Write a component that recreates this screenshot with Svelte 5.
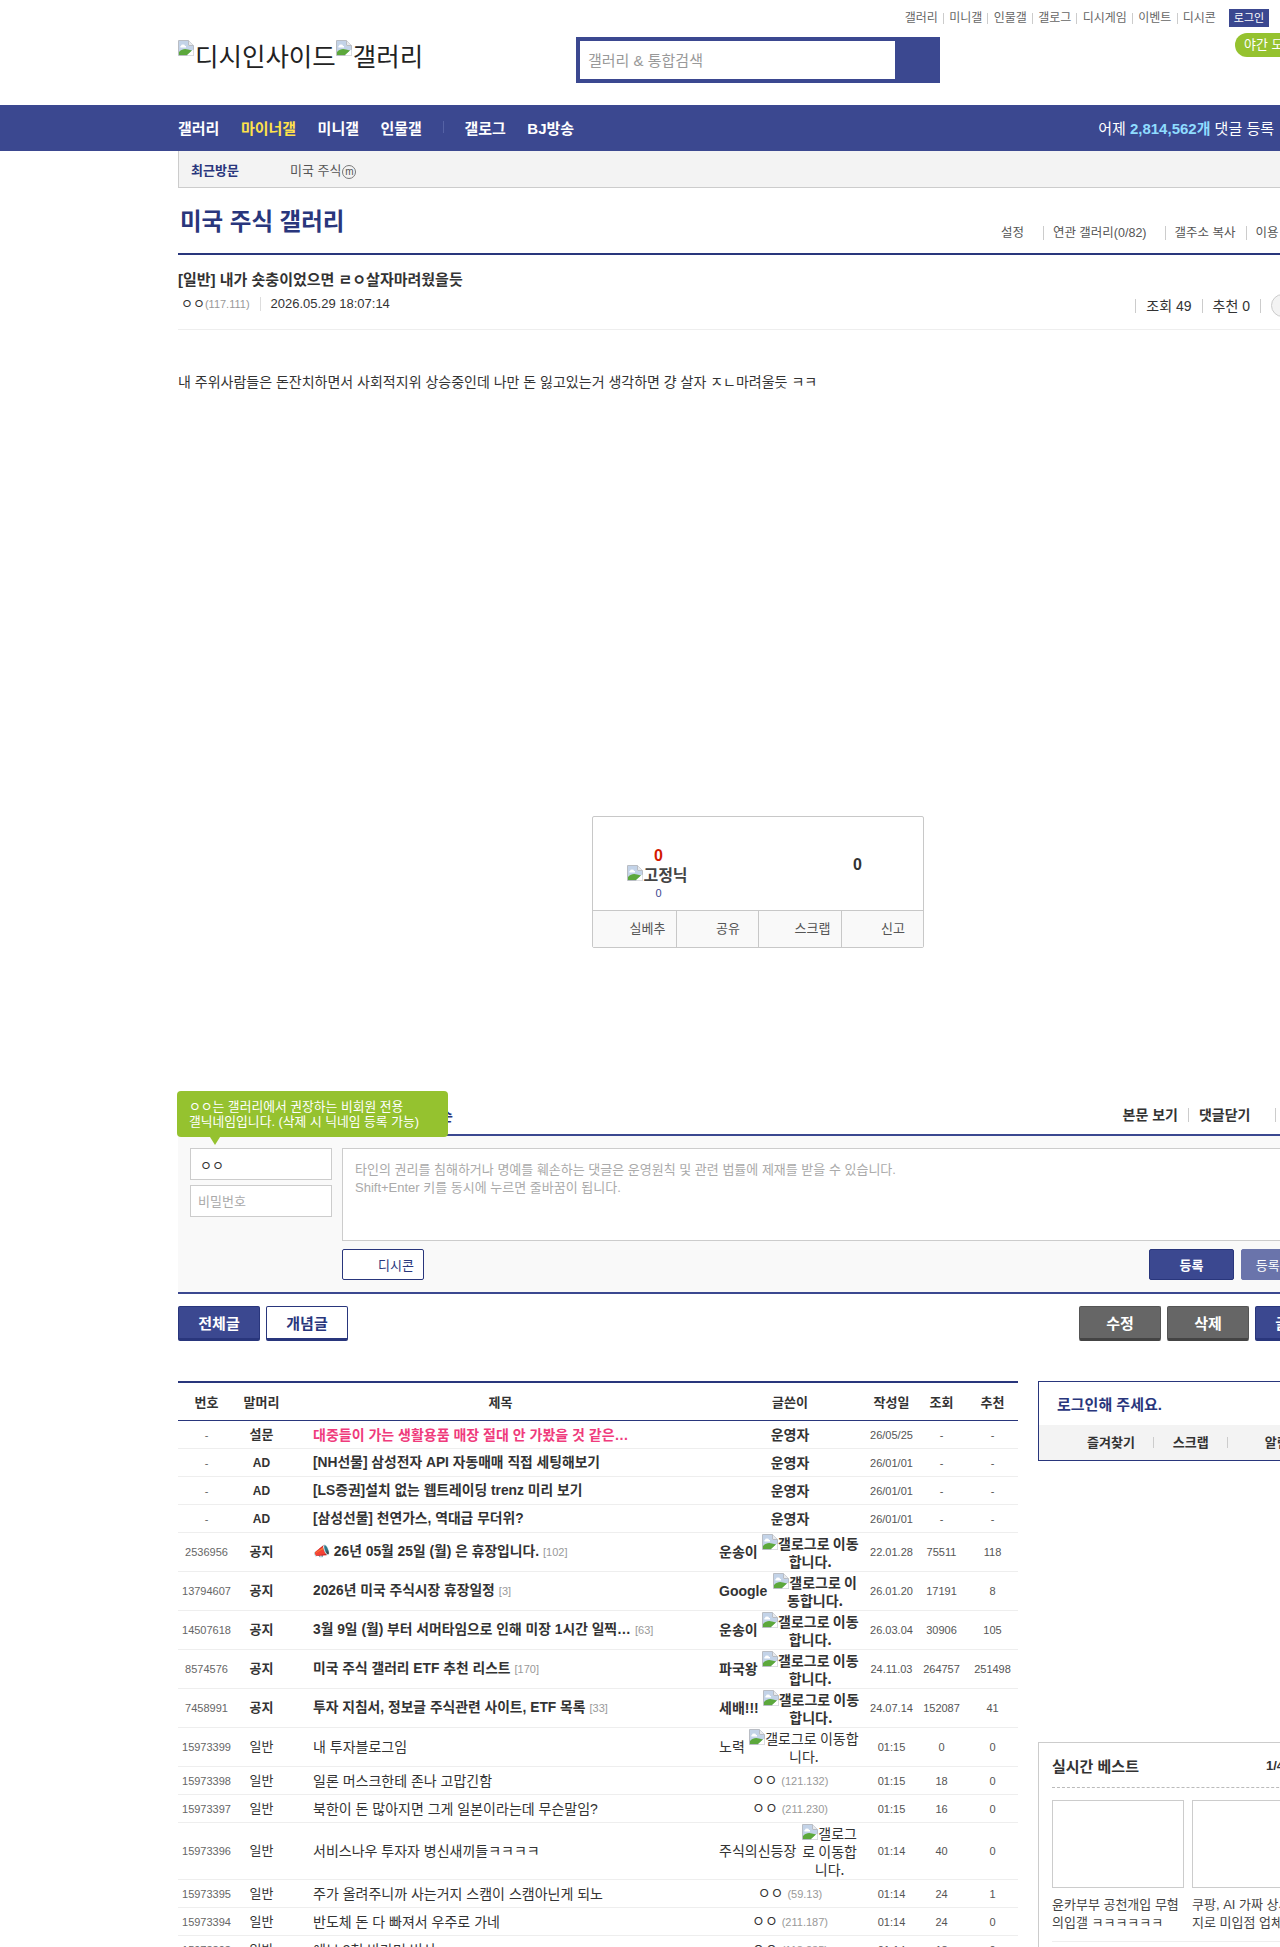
<script>
  const topLinks = ["갤러리", "미니갤", "인물갤", "갤로그", "디시게임", "이벤트", "디시콘"];

  const rows = [
    { num: "-", head: "설문", title: "대중들이 가는 생활용품 매장 절대 안 가봤을 것 같은 연예인은?", kind: "poll", nick: "운영자", date: "26/05/25", view: "-", rec: "-" },
    { num: "-", head: "AD", title: "[NH선물] 삼성전자 API 자동매매 직접 세팅해보기", kind: "bold", nick: "운영자", date: "26/01/01", view: "-", rec: "-" },
    { num: "-", head: "AD", title: "[LS증권]설치 없는 웹트레이딩 trenz 미리 보기", kind: "bold", nick: "운영자", date: "26/01/01", view: "-", rec: "-" },
    { num: "-", head: "AD", title: "[삼성선물] 천연가스, 역대급 무더위?", kind: "bold", nick: "운영자", date: "26/01/01", view: "-", rec: "-" },
    { num: "2536956", head: "공지", title: "📣 26년 05월 25일 (월) 은 휴장입니다.", reply: 102, kind: "bold", writer: "운송이", date: "22.01.28", view: "75511", rec: "118" },
    { num: "13794607", head: "공지", title: "2026년 미국 주식시장 휴장일정", reply: 3, kind: "bold", writer: "Google", date: "26.01.20", view: "17191", rec: "8" },
    { num: "14507618", head: "공지", title: "3월 9일 (월) 부터 서머타임으로 인해 미장 1시간 일찍 열립니다", reply: 63, kind: "bold", writer: "운송이", date: "26.03.04", view: "30906", rec: "105" },
    { num: "8574576", head: "공지", title: "미국 주식 갤러리 ETF 추천 리스트", reply: 170, kind: "bold", writer: "파국왕", date: "24.11.03", view: "264757", rec: "251498" },
    { num: "7458991", head: "공지", title: "투자 지침서, 정보글 주식관련 사이트, ETF 목록", reply: 33, kind: "bold", writer: "세배!!!", date: "24.07.14", view: "152087", rec: "41" },
    { num: "15973399", head: "일반", title: "내 투자블로그임", writer: "노력", date: "01:15", view: "0", rec: "0" },
    { num: "15973398", head: "일반", title: "일론 머스크한테 존나 고맙긴함", ip: "121.132", date: "01:15", view: "18", rec: "0" },
    { num: "15973397", head: "일반", title: "북한이 돈 많아지면 그게 일본이라는데 무슨말임?", ip: "211.230", date: "01:15", view: "16", rec: "0" },
    { num: "15973396", head: "일반", title: "서비스나우 투자자 병신새끼들ㅋㅋㅋㅋ", writer: "주식의신등장", date: "01:14", view: "40", rec: "0" },
    { num: "15973395", head: "일반", title: "주가 올려주니까 사는거지 스캠이 스캠아닌게 되노", ip: "59.13", date: "01:14", view: "24", rec: "1" },
    { num: "15973394", head: "일반", title: "반도체 돈 다 빠져서 우주로 가네", ip: "211.187", date: "01:14", view: "24", rec: "0" },
    { num: "15973393", head: "일반", title: "에브 9천 바라며 버서", ip: "118.235", date: "01:14", view: "18", rec: "0" }
  ];
</script>

{#snippet broken()}
  <svg class="broken" width="16" height="16" viewBox="0 0 16 16" aria-hidden="true">
    <path d="M0.5 0.5H10.5L15.5 5.5V15.5H0.5Z" fill="#fff" stroke="#b9bdc4" />
    <path d="M1 1H10V6H15V10L9 15H1Z" fill="#c3d3e8" />
    <path d="M3 6a2 1.4 0 0 1 4 0h1v1.4H2.4V6Z" fill="#fff" />
    <path d="M1 15V12C4 9 7 8.6 10 9.6L14 10.6L9 15Z" fill="#5ca83c" />
    <path d="M10.5 .5V5.5H15.5" fill="#e8eaed" stroke="#b9bdc4" />
    <path d="M9 15.5L15.5 9.5V15.5Z" fill="#fff" />
  </svg>
{/snippet}

<div class="page">
  <header class="top">
    <div class="top-links">
      {#each topLinks as link}
        <span class="top-link">{link}</span>
      {/each}
      <span class="login">로그인</span>
    </div>
    <div class="brand-row">
      <div class="logo">{@render broken()}디시인사이드{@render broken()}갤러리</div>
      <div class="search">
        <input class="search-input" type="text" placeholder="갤러리 &amp; 통합검색" />
      </div>
      <div class="night">야간 모드</div>
    </div>
  </header>

  <nav class="gnb">
    <div class="gnb-in">
      <span class="gnb-item">갤러리</span>
      <span class="gnb-item on">마이너갤</span>
      <span class="gnb-item">미니갤</span>
      <span class="gnb-item">인물갤</span>
      <i class="gnb-bar"></i>
      <span class="gnb-item">갤로그</span>
      <span class="gnb-item">BJ방송</span>
      <span class="gnb-count">어제 <b>2,814,562개</b> 댓글 등록</span>
    </div>
  </nav>

  <main class="wrap">
    <div class="recent">
      <strong>최근방문</strong>
      <span class="recent-item">미국 주식<i class="m-mark">m</i></span>
    </div>

    <div class="gall-head">
      <h2>미국 주식 갤러리</h2>
      <div class="gall-links">
        <span class="first">설정</span>
        <span class="related">연관 갤러리(0/82)</span>
        <span>갤주소 복사</span>
        <span>이용 안내</span>
      </div>
    </div>

    <div class="post-head">
      <h3>[일반] 내가 숏충이었으면 ㄹㅇ살자마려웠을듯</h3>
      <div class="post-meta">
        <span class="meta-nick">ㅇㅇ<em>(117.111)</em></span>
        <span class="meta-date">2026.05.29 18:07:14</span>
        <span class="meta-right">
          <span class="meta-cell">조회 49</span>
          <span class="meta-cell">추천 0</span>
          <span class="meta-cell end"><i class="round"></i></span>
        </span>
      </div>
    </div>

    <div class="content">내 주위사람들은 돈잔치하면서 사회적지위 상승중인데 나만 돈 잃고있는거 생각하면 걍 살자 ㅈㄴ마려울듯 ㅋㅋ</div>

    <div class="reco">
      <div class="reco-top">
        <div class="reco-left">
          <b class="red">0</b>
          <div class="fix">{@render broken()}고정닉</div>
          <span class="fix-count">0</span>
        </div>
        <b class="reco-right">0</b>
      </div>
      <div class="reco-btns">
        <span>실베추</span>
        <span>공유</span>
        <span>스크랩</span>
        <span>신고</span>
      </div>
    </div>

    <section class="cmt">
      <div class="cmt-head">
        <strong>전체 댓글 0개 등록순</strong>
        <div class="cmt-links">
          <span>본문 보기</span>
          <span>댓글닫기</span>
          <span>새로고침</span>
        </div>
      </div>
      <div class="tip">ㅇㅇ는 갤러리에서 권장하는 비회원 전용<br />갤닉네임입니다. (삭제 시 닉네임 등록 가능)</div>
      <div class="cmt-form">
        <div class="cmt-user">
          <input class="nick-input" type="text" value="ㅇㅇ" />
          <input type="password" placeholder="비밀번호" />
        </div>
        <div class="cmt-body">
          <textarea placeholder={"타인의 권리를 침해하거나 명예를 훼손하는 댓글은 운영원칙 및 관련 법률에 제재를 받을 수 있습니다.\nShift+Enter 키를 동시에 누르면 줄바꿈이 됩니다."}></textarea>
          <div class="cmt-btns">
            <button class="dccon">디시콘</button>
            <button class="reg">등록</button>
            <button class="reg plus">등록+추천</button>
          </div>
        </div>
      </div>
    </section>

    <div class="actions">
      <button class="act blue">전체글</button>
      <button class="act white">개념글</button>
      <span class="act-gap"></span>
      <button class="act gray">수정</button>
      <button class="act gray">삭제</button>
      <button class="act blue">글쓰기</button>
    </div>

    <div class="bottom">
      <table class="list">
        <colgroup>
          <col style="width:57px" />
          <col style="width:53px" />
          <col />
          <col style="width:154px" />
          <col style="width:49px" />
          <col style="width:51px" />
          <col style="width:51px" />
        </colgroup>
        <thead>
          <tr>
            <th>번호</th>
            <th>말머리</th>
            <th>제목</th>
            <th>글쓴이</th>
            <th>작성일</th>
            <th>조회</th>
            <th>추천</th>
          </tr>
        </thead>
        <tbody>
          {#each rows as row}
            <tr>
              <td class="num">{row.num}</td>
              <td class="head" class:strong={row.kind} class:latin={row.head === "AD"}>{row.head}</td>
              <td class="title">
                <div class="title-in">
                  <span class="title-txt" class:strong={row.kind} class:poll={row.kind === "poll"}>{row.title}</span>
                  {#if row.reply}<span class="reply">[{row.reply}]</span>{/if}
                </div>
              </td>
              <td class="writer" class:strong={row.kind}>
                {#if row.writer}
                  <div class="writer-in">
                    <span class="nick">{row.writer}</span>
                    <span class="gallog">{@render broken()}갤로그로 이동합니다.</span>
                  </div>
                {:else if row.ip}
                  ㅇㅇ <span class="ip">({row.ip})</span>
                {:else}
                  {row.nick}
                {/if}
              </td>
              <td class="small">{row.date}</td>
              <td class="small">{row.view}</td>
              <td class="small">{row.rec}</td>
            </tr>
          {/each}
        </tbody>
      </table>

      <aside class="side">
        <div class="login-box">
          <p>로그인해 주세요.</p>
          <div class="login-menu">
            <span>즐겨찾기</span>
            <span>스크랩</span>
            <span>알림</span>
          </div>
        </div>
        <div class="best">
          <div class="best-head">
            <strong>실시간 베스트</strong>
            <b>1/4</b>
          </div>
          <div class="best-grid">
            <div class="best-card">
              <div class="thumb"></div>
              <p>윤카부부 공천개입 무혐의입갤 ㅋㅋㅋㅋㅋㅋ</p>
            </div>
            <div class="best-card">
              <div class="thumb"></div>
              <p>쿠팡, AI 가짜 상세페이지로 미입점 업체</p>
            </div>
          </div>
        </div>
      </aside>
    </div>
  </main>
</div>

<style>
  :global(body) {
    margin: 0;
    background: #fff;
    overflow: hidden;
  }

  .page {
    width: 1280px;
    height: 1947px;
    overflow: hidden;
    font-family: "Liberation Sans", "Noto Sans CJK KR", sans-serif;
    font-size: 13px;
    color: #333;
  }

  .broken {
    vertical-align: baseline;
  }

  /* header */
  .top {
    height: 105px;
    padding-left: 178px;
    box-sizing: border-box;
  }

  .top-links {
    display: flex;
    align-items: center;
    justify-content: flex-end;
    width: 1091px;
    height: 18px;
    padding-top: 9px;
    font-size: 12px;
    color: #666;
  }

  .top-link {
    line-height: 11px;
    padding: 0 5.2px;
    border-left: 1px solid #ccc;
  }

  .top-link:first-child {
    border-left: 0;
  }

  .login {
    margin-left: 8px;
    width: 40px;
    height: 18px;
    line-height: 18px;
    text-align: center;
    font-size: 11px;
    white-space: nowrap;
    color: #fff;
    background: #3b4890;
  }

  .brand-row {
    display: grid;
    grid-template-columns: 398px 364px 295px 80px;
    margin-top: 6px;
    align-items: start;
  }

  .logo {
    margin-top: 7px;
    font-size: 25.5px;
    line-height: 30px;
    white-space: nowrap;
    color: #222;
  }

  .logo .broken {
    vertical-align: 10px;
    margin-right: 1px;
  }

  .search {
    margin-top: 4px;
    height: 38px;
    border: 4px solid #3b4890;
    border-right-width: 45px;
    background: #fff;
  }

  .search-input {
    box-sizing: border-box;
    width: 100%;
    height: 38px;
    padding: 0 8px;
    border: 0;
    outline: 0;
    font: 15px "Liberation Sans", "Noto Sans CJK KR", sans-serif;
    background: transparent;
  }

  .search-input::placeholder {
    color: #999;
  }

  .night {
    grid-column: 4;
    height: 24px;
    line-height: 24px;
    padding-left: 9px;
    border-radius: 12px 0 0 12px;
    font-size: 13px;
    color: #fff;
    background: #95c22f;
    white-space: nowrap;
  }

  .gnb {
    height: 46px;
    background: #3b4890;
  }

  .gnb-in {
    display: flex;
    align-items: center;
    box-sizing: border-box;
    height: 44px;
    padding: 0 6px 0 178px;
    white-space: nowrap;
  }

  .gnb-item {
    margin-right: 21.5px;
    font-size: 15px;
    font-weight: bold;
    color: #fff;
  }

  .gnb-item.on {
    color: #ffe24a;
  }

  .gnb-bar {
    width: 1px;
    height: 12px;
    margin: 0 20px 0 0;
    background: #5562a5;
  }

  .gnb-count {
    margin-left: auto;
    font-size: 15px;
    color: #fff;
  }

  .gnb-count b {
    color: #8fdcff;
  }

  /* content column */
  .wrap {
    width: 1160px;
    margin-left: 178px;
  }

  .recent {
    display: flex;
    align-items: center;
    height: 36px;
    border-left: 1px solid #ccc;
    border-bottom: 1px solid #ccc;
    background: #f3f3f3;
    padding-left: 12px;
    font-size: 13px;
    color: #555;
  }

  .recent strong {
    width: 99px;
    color: #29367c;
    font-size: 13px;
  }

  .m-mark {
    display: inline-block;
    width: 12px;
    height: 12px;
    margin-left: 1px;
    border: 1px solid #777;
    border-radius: 50%;
    line-height: 11px;
    text-align: center;
    font-size: 10px;
    font-style: normal;
    color: #555;
  }

  .gall-head {
    display: flex;
    align-items: flex-end;
    justify-content: space-between;
    height: 65px;
    border-bottom: 2px solid #29367c;
  }

  .gall-head h2 {
    margin: 0 0 13px 2px;
    font-size: 23.5px;
    line-height: 35px;
    font-weight: bold;
    color: #29367c;
  }

  .gall-links {
    display: flex;
    margin: 0 23px 13px 0;
    font-size: 12.5px;
    line-height: 14px;
    color: #555;
    white-space: nowrap;
  }

  .gall-links span {
    padding: 0 10px 0 9px;
    border-left: 1px solid #ccc;
  }

  .gall-links .first {
    border-left: 0;
    padding-right: 19px;
  }

  .gall-links .related {
    padding-right: 18px;
  }

  .post-head {
    height: 74px;
    border-bottom: 1px solid #eee;
  }

  .post-head h3 {
    margin: 0;
    padding-top: 14px;
    font-size: 15px;
    line-height: 22px;
    font-weight: bold;
    color: #333;
  }

  .post-meta {
    display: flex;
    align-items: center;
    margin-top: 3px;
    font-size: 13px;
    line-height: 20px;
  }

  .meta-nick {
    padding: 0 10px 0 3px;
    border-right: 1px solid #ddd;
    line-height: 14px;
  }

  .meta-nick em {
    font-style: normal;
    font-size: 11px;
    color: #999;
  }

  .meta-date {
    padding-left: 10px;
    font-size: 13px;
  }

  .meta-right {
    display: flex;
    align-items: center;
    position: relative;
    top: 2px;
    margin-left: auto;
  }

  .meta-cell {
    padding: 0 10px;
    border-left: 1px solid #ccc;
    font-size: 14px;
    line-height: 14px;
    white-space: nowrap;
  }

  .meta-cell.end {
    width: 78px;
    height: 14px;
    box-sizing: border-box;
  }

  .round {
    display: block;
    position: relative;
    top: -5px;
    width: 60px;
    height: 23px;
    box-sizing: border-box;
    border: 1px solid #ccc;
    border-radius: 12px;
    background: #f3f3f3;
  }

  .content {
    height: 444px;
    padding-top: 42px;
    font-size: 14px;
    line-height: 20px;
  }

  .reco {
    box-sizing: border-box;
    width: 332px;
    margin: 0 auto;
    border: 1px solid #c8c8c8;
    border-radius: 2px;
  }

  .reco-top {
    display: flex;
    height: 93px;
    border-bottom: 1px solid #c8c8c8;
  }

  .reco-left {
    display: flex;
    flex-direction: column;
    align-items: center;
    width: 131px;
    padding-top: 30px;
  }

  .red {
    font-size: 16px;
    line-height: 18px;
    color: #d31900;
  }

  .fix {
    font-size: 16px;
    font-weight: bold;
    line-height: 20px;
    color: #444;
    white-space: nowrap;
    margin-left: -2px;
  }

  .fix-count {
    font-size: 11px;
    line-height: 14px;
    color: #3b4890;
  }

  .reco-right {
    margin: 39px 0 0 129px;
    font-size: 16px;
    line-height: 18px;
  }

  .reco-btns {
    display: grid;
    grid-template-columns: repeat(4, 1fr);
    height: 36px;
    background: #f9f9f9;
  }

  .reco-btns span {
    padding-right: 10px;
    border-left: 1px solid #c8c8c8;
    line-height: 36px;
    text-align: right;
    font-size: 13px;
    color: #555;
  }

  .reco-btns span:nth-child(even) {
    padding-right: 18px;
  }

  .reco-btns span:first-child {
    border-left: 0;
  }

  /* comments */
  .cmt {
    position: relative;
    margin-top: 151px;
  }

  .cmt-head {
    display: flex;
    align-items: center;
    box-sizing: content-box;
    height: 32px;
    padding-bottom: 3px;
    border-bottom: 2px solid #3b4890;
    white-space: nowrap;
  }

  .cmt-head strong {
    width: 275px;
    text-align: right;
    font-size: 14px;
    color: #29367c;
  }

  .cmt-links {
    display: flex;
    margin-left: auto;
    font-size: 14px;
    font-weight: bold;
    line-height: 14px;
  }

  .cmt-links span {
    padding: 0 10px;
    border-left: 1px solid #ccc;
  }

  .cmt-links span:first-child {
    border-left: 0;
  }

  .cmt-links span:nth-child(2) {
    padding-right: 25px;
  }

  .cmt-links span:last-child {
    padding-right: 0;
  }

  .tip {
    position: absolute;
    left: -1px;
    top: -8px;
    box-sizing: border-box;
    width: 271px;
    height: 46px;
    padding: 8px 0 0 12px;
    border-radius: 4px;
    font-size: 12.8px;
    line-height: 15px;
    color: #fff;
    background: #95c22f;
    white-space: nowrap;
  }

  .tip::after {
    content: "";
    position: absolute;
    left: 33px;
    bottom: -8px;
    border: 5px solid transparent;
    border-bottom-width: 0;
    border-top: 8px solid #95c22f;
  }

  .cmt-form {
    display: flex;
    gap: 10px;
    padding: 12px;
    background: #f9f9f9;
    border-bottom: 2px solid #3b4890;
  }

  .cmt-user {
    display: flex;
    flex-direction: column;
    gap: 5px;
    width: 142px;
  }

  .cmt-user input {
    box-sizing: border-box;
    width: 142px;
    height: 32px;
    padding: 0 7px;
    border: 1px solid #ccc;
    outline: 0;
    font: 13px "Liberation Sans", "Noto Sans CJK KR", sans-serif;
    background: #fff;
    color: #333;
  }

  .cmt-user .nick-input {
    padding-left: 9px;
  }

  input::placeholder {
    color: #aaa;
  }

  .cmt-body {
    flex: 1;
  }

  textarea {
    display: block;
    box-sizing: border-box;
    width: 100%;
    height: 93px;
    padding: 12px;
    border: 1px solid #ccc;
    outline: 0;
    resize: none;
    font: 13px/18px "Liberation Sans", "Noto Sans CJK KR", sans-serif;
    background: #fff;
  }

  textarea::placeholder {
    color: #aaa;
  }

  .cmt-btns {
    display: flex;
    gap: 7px;
    margin-top: 8px;
  }

  .cmt-btns button {
    box-sizing: border-box;
    height: 31px;
    padding: 0;
    border-radius: 2px;
    font: 13px "Liberation Sans", "Noto Sans CJK KR", sans-serif;
    cursor: pointer;
  }

  .cmt-btns .dccon {
    width: 82px;
    margin-right: auto;
    padding-left: 26px;
    border: 1px solid #29367c;
    background: #fff;
    color: #29367c;
  }

  .cmt-btns .reg {
    width: 85px;
    border: 1px solid #29367c;
    background: #3b4890;
    color: #fff;
    font-weight: bold;
  }

  .cmt-btns .reg.plus {
    border-color: #6a74ab;
    background: #6a74ab;
    font-weight: normal;
  }

  .actions {
    display: flex;
    gap: 6px;
    margin-top: 12px;
  }

  .act {
    box-sizing: border-box;
    width: 82px;
    height: 35px;
    padding: 0;
    border-radius: 2px;
    font: bold 15px "Liberation Sans", "Noto Sans CJK KR", sans-serif;
  }

  .act.blue {
    border: 1px solid #29367c;
    border-bottom-width: 3px;
    background: #3b4890;
    color: #fff;
  }

  .act.white {
    border: 1px solid #29367c;
    border-bottom-width: 3px;
    background: #fff;
    color: #29367c;
  }

  .act.gray {
    border: 1px solid #555;
    border-bottom: 3px solid #444;
    background: #666;
    color: #fff;
  }

  .act-gap {
    width: 719px;
  }

  /* list */
  .bottom {
    display: flex;
    align-items: flex-start;
    gap: 20px;
    margin-top: 40px;
  }

  .list {
    flex: none;
    width: 840px;
    border-collapse: collapse;
    table-layout: fixed;
    border-top: 2px solid #29367c;
  }

  .list th {
    height: 37px;
    padding: 0;
    border-bottom: 1px solid #29367c;
    font-size: 13px;
    font-weight: bold;
    color: #333;
  }

  .list td {
    height: 25px;
    padding: 1px 0;
    border-bottom: 1px solid #eee;
    text-align: center;
    font-size: 11px;
    color: #555;
    line-height: 18px;
  }

  .list td.num {
    color: #666;
  }

  .list td.head {
    font-size: 13px;
    color: #333;
  }

  .list td.head.latin {
    font-size: 12px;
  }

  .list td.strong {
    font-weight: bold;
  }

  .list td.title {
    padding-left: 25px;
    text-align: left;
    font-size: 14px;
    white-space: nowrap;
  }

  .title-in {
    display: flex;
    align-items: center;
  }

  .title-txt {
    box-sizing: border-box;
    max-width: 322px;
    padding-right: 4px;
    overflow: hidden;
    text-overflow: ellipsis;
    color: #333;
  }

  .title-txt.strong {
    font-size: 13.8px;
    font-weight: bold;
  }

  .title-txt.poll {
    font-size: 14px;
    color: #ef3b7c;
  }

  .reply {
    font-size: 11px;
    color: #999;
  }

  .list td.writer {
    font-size: 14px;
    color: #333;
  }

  .writer-in {
    display: flex;
    align-items: center;
    padding: 0 7px 0 6px;
  }

  .nick {
    flex: none;
    margin-right: 3px;
  }

  .gallog {
    flex: 1;
    min-width: 0;
    font-family: "Noto Sans CJK KR", sans-serif;
    text-align: center;
  }

  .gallog .broken {
    vertical-align: -1px;
  }

  .ip {
    font-size: 11px;
    font-weight: normal;
    color: #999;
  }

  .side {
    flex: none;
    width: 300px;
  }

  .login-box {
    box-sizing: border-box;
    height: 80px;
    border: 1px solid #29367c;
  }

  .login-box p {
    margin: 0;
    height: 43px;
    padding-left: 18px;
    line-height: 45px;
    font-size: 15px;
    font-weight: bold;
    color: #29367c;
  }

  .login-menu {
    display: flex;
    align-items: center;
    height: 35px;
    padding-left: 48px;
    background: #f3f3f3;
    font-size: 13px;
    font-weight: bold;
    white-space: nowrap;
  }

  .login-menu span {
    padding-right: 18px;
    margin-right: 19px;
    border-right: 1px solid #ccc;
    line-height: 11px;
  }

  .login-menu span:last-child {
    margin-left: 18px;
    border: 0;
  }

  .best {
    box-sizing: border-box;
    height: 300px;
    margin-top: 281px;
    padding: 0 13px;
    border: 1px solid #ccc;
  }

  .best-head {
    display: flex;
    justify-content: space-between;
    align-items: center;
    height: 44px;
    border-bottom: 1px dashed #bbb;
    font-size: 15px;
    white-space: nowrap;
  }

  .best-head b {
    font-size: 13px;
    margin-right: 40px;
  }

  .best-grid {
    display: grid;
    grid-template-columns: 132px 132px;
    gap: 8px;
    margin-top: 12px;
    padding-bottom: 9px;
    border-bottom: 1px solid #eee;
  }

  .thumb {
    box-sizing: border-box;
    height: 88px;
    border: 1px solid #ccc;
  }

  .best-card p {
    margin: 8px 0 0;
    font-size: 13px;
    line-height: 18px;
    color: #444;
  }
</style>
